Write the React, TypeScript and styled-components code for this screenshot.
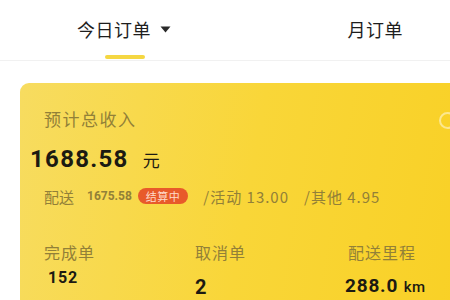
import React from "react";
import styled, { createGlobalStyle } from "styled-components";

const Global = createGlobalStyle`
  html, body { margin: 0; padding: 0; background: #fff; overflow: hidden; }
  body { font-family: "Noto Sans CJK SC", "Noto Sans", sans-serif; width: 450px; height: 300px; }
`;

const Page = styled.div`
  width: 450px;
  height: 300px;
  overflow: hidden;
  background: #fff;
`;

const TabBar = styled.div`
  height: 61px;
  display: flex;
  justify-content: space-between;
  padding: 0 47px 0 77px;
  border-bottom: 1px solid #f1f1f1;
  box-sizing: border-box;
`;

const Tab = styled.div`
  position: relative;
  display: flex;
  align-items: center;
  gap: 9px;
  height: 100%;
  padding-bottom: 2px;
  box-sizing: border-box;
  font-size: 18px;
  color: #1e1e1e;
  letter-spacing: 0.5px;
`;

const Underline = styled.span`
  position: absolute;
  left: 28px;
  bottom: 1px;
  width: 40px;
  height: 4px;
  border-radius: 2px;
  background: #f5d742;
`;

const Card = styled.div`
  margin: 22px -20px 0 20px;
  height: 260px;
  border-radius: 9px;
  background: linear-gradient(100deg, #f7dc60 0%, #f9d638 50%, #f9d024 100%);
  position: relative;
  padding: 25px 0 0 24px;
  box-sizing: border-box;
`;

const Label = styled.div<{ $size?: number; $ls?: number }>`
  font-size: ${(p) => p.$size ?? 16}px;
  letter-spacing: ${(p) => p.$ls ?? 1}px;
  color: #928038;
  line-height: 22px;
  white-space: nowrap;
`;

const TotalRow = styled.div`
  display: flex;
  align-items: baseline;
  gap: 14px;
  margin: 14px 0 0 -14px;
  line-height: 30px;
`;

const BigNum = styled.span`
  font-family: "Roboto", "Liberation Sans", sans-serif;
  font-weight: 700;
  font-size: 24px;
  color: #1c1a12;
  letter-spacing: 1.3px;
`;

const Unit = styled.span`
  font-size: 17px;
  color: #1c1a12;
`;

const DetailRow = styled.div`
  display: flex;
  align-items: center;
  margin-top: 10px;
  font-size: 15px;
  color: #928038;
  height: 22px;
  white-space: nowrap;
`;

const SmallNum = styled.span`
  font-family: "Roboto", "Liberation Sans", sans-serif;
  font-weight: 700;
  font-size: 12px;
  color: #928038;
  margin-left: 13px;
`;

const Badge = styled.span`
  margin-left: 6px;
  background: #e85a2a;
  color: #ffd9c8;
  font-size: 11px;
  border-radius: 8px;
  padding: 0 8px;
  height: 16px;
  line-height: 16px;
  letter-spacing: 0.5px;
`;

const Extra = styled.span<{ $ml: number }>`
  margin-left: ${(p) => p.$ml}px;
  font-size: 15px;
  letter-spacing: 1px;
`;

const Stats = styled.div`
  display: grid;
  grid-template-columns: 151px 153px auto;
  margin-top: 34px;
`;

const Stat = styled.div`
  display: flex;
  flex-direction: column;
`;

const StatValue = styled.div<{ $size: number; $mt: number; $ml?: number }>`
  font-family: "Roboto", "Liberation Sans", sans-serif;
  font-weight: 700;
  font-size: ${(p) => p.$size}px;
  color: #1c1a12;
  margin-top: ${(p) => p.$mt}px;
  margin-left: ${(p) => p.$ml ?? 0}px;
  line-height: 24px;
  letter-spacing: 0.8px;
  white-space: nowrap;
`;

const Km = styled.span`
  font-size: 15px;
  font-weight: 500;
  letter-spacing: 0.5px;
`;

const HelpIcon = styled.div`
  position: absolute;
  top: 29px;
  right: 14px;
  width: 17px;
  height: 17px;
  border-radius: 50%;
  border: 2px solid rgba(255, 250, 225, 0.55);
  box-sizing: border-box;
`;

export default function App() {
  return (
    <Page>
      <Global />
      <TabBar>
        <Tab>
          今日订单
          <svg width="11" height="7" viewBox="0 0 11 7">
            <path d="M0.5 0.5 L10.5 0.5 L5.5 6.5 Z" fill="#2a2a2a" />
          </svg>
          <Underline />
        </Tab>
        <Tab>月订单</Tab>
      </TabBar>
      <Card>
        <HelpIcon />
        <Label $size={17} $ls={1.5}>预计总收入</Label>
        <TotalRow>
          <BigNum>1688.58</BigNum>
          <Unit>元</Unit>
        </TotalRow>
        <DetailRow>
          配送
          <SmallNum>1675.58</SmallNum>
          <Badge>结算中</Badge>
          <Extra $ml={15}>/活动 13.00</Extra>
          <Extra $ml={15}>/其他 4.95</Extra>
        </DetailRow>
        <Stats>
          <Stat>
            <Label>完成单</Label>
            <StatValue $size={16} $mt={3} $ml={4}>152</StatValue>
          </Stat>
          <Stat>
            <Label>取消单</Label>
            <StatValue $size={20} $mt={12}>2</StatValue>
          </Stat>
          <Stat>
            <Label>配送里程</Label>
            <StatValue $size={19} $mt={11} $ml={-3}>
              288.0 <Km>km</Km>
            </StatValue>
          </Stat>
        </Stats>
      </Card>
    </Page>
  );
}
